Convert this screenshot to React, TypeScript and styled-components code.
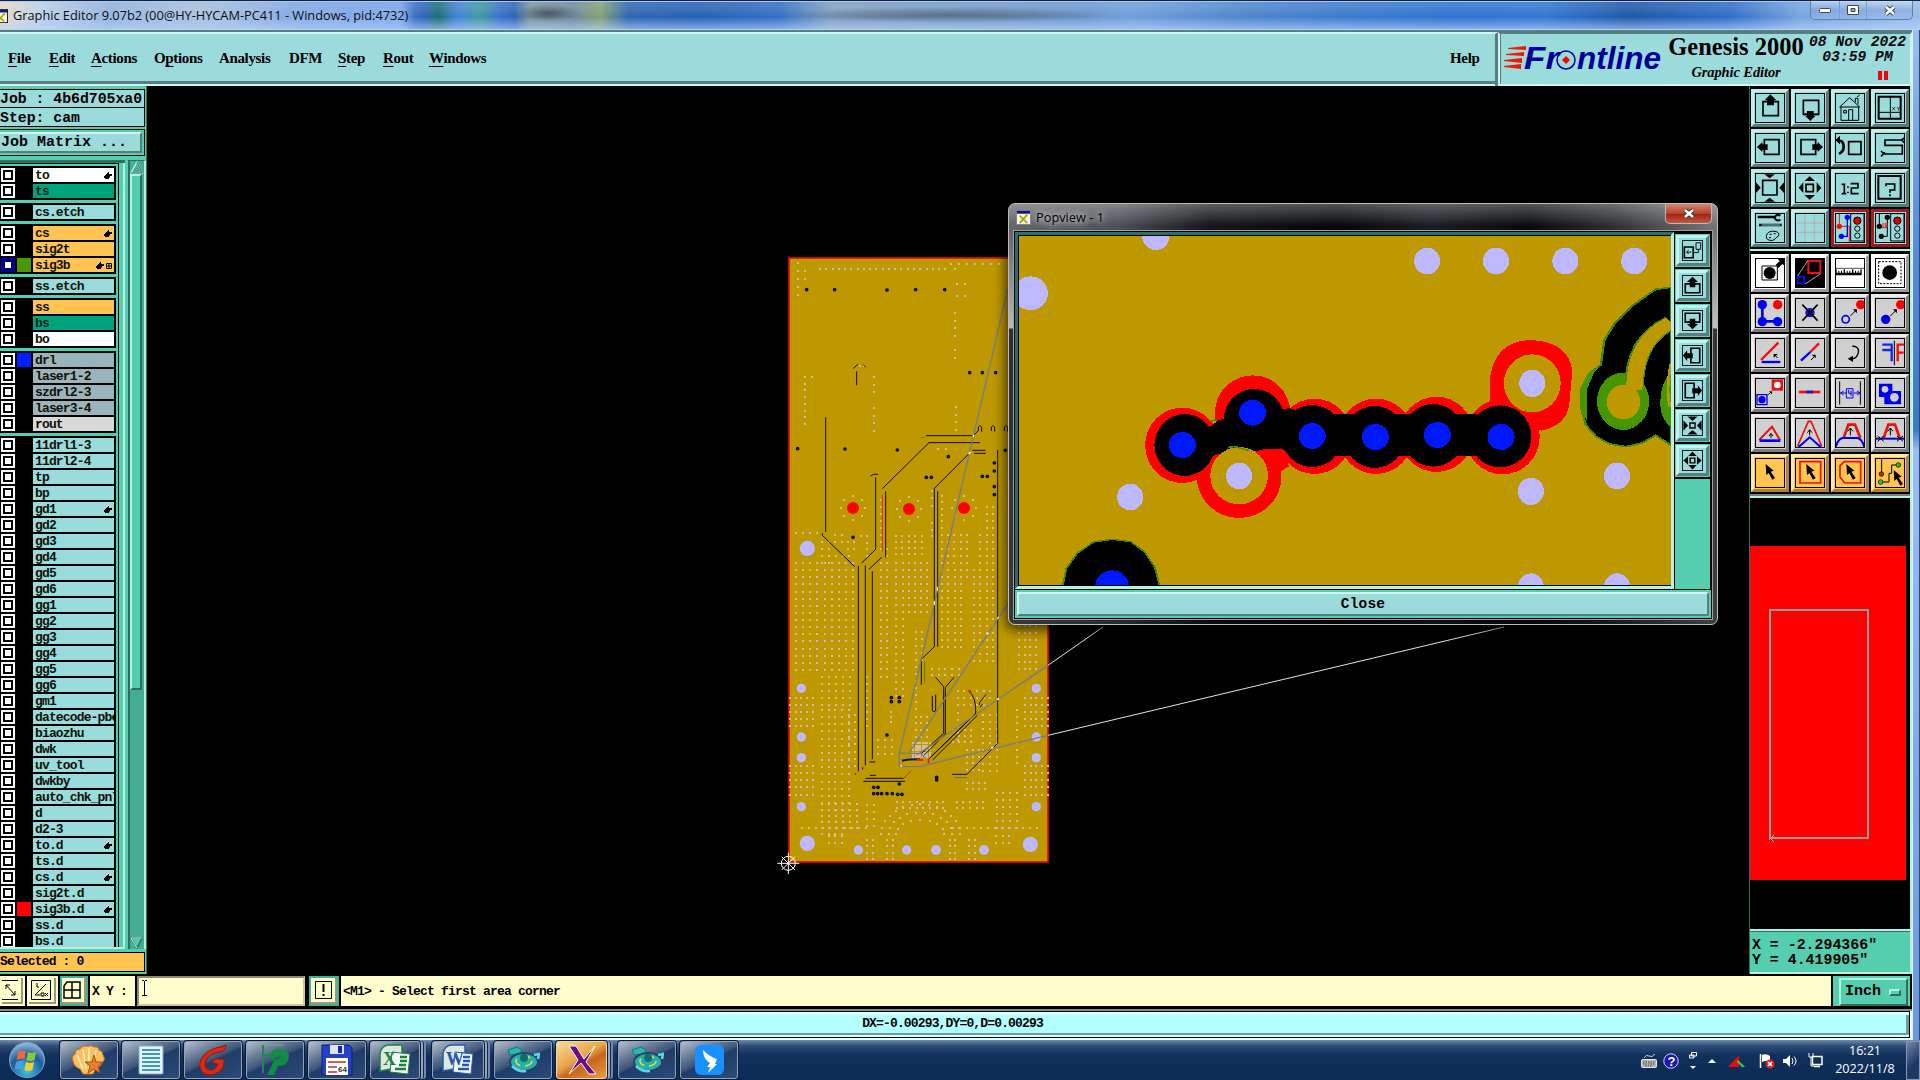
import React from "react";
import styled, { createGlobalStyle } from "styled-components";

const C = {
  aqua: "#9cdbdb",
  teal: "#55ceb0",
  tealDark: "#2f6e62",
  tealMid: "#44ae94",
  tealLight: "#b4f2e4",
  aquaLight: "#d2f5f3",
  aquaDark: "#557f80",
  orange: "#ffc550",
  cream: "#ffffce",
  gold: "#be9800",
  pad: "#bdb8ff",
};

const Global = createGlobalStyle`
  * { box-sizing: border-box; }
  body { margin: 0; background: #000; overflow: hidden; }
  svg { display: block; }
`;

const mono = `"Liberation Mono", "Courier New", monospace`;
const serif = `"Liberation Serif", "Times New Roman", serif`;
const sans = `"Open Sans", "Noto Sans", sans-serif`;

const Screen = styled.div`
  width: 1920px;
  height: 1080px;
  display: flex;
  flex-direction: column;
  background: #000;
  overflow: hidden;
`;

/* ---------- title bar ---------- */
const TitleBar = styled.header`
  height: 30px;
  display: flex;
  align-items: flex-start;
  border-top: 1px solid #16223c;
  box-shadow: inset 0 1px 0 #a8c8f0, inset 0 -1px 0 #b8d2f4;
  background:
    linear-gradient(180deg, rgba(255,255,255,0.12) 0 20%, rgba(0,0,0,0) 55%, rgba(190,215,255,0.55) 92%),
    radial-gradient(ellipse 30px 9px at 548px 12px, rgba(50,60,80,0.75), rgba(50,60,80,0) 100%),
    radial-gradient(ellipse 160px 8px at 950px 14px, rgba(70,80,90,0.6), rgba(70,80,90,0.3) 60%, rgba(70,80,90,0) 100%),
    linear-gradient(90deg, #e8d8c0 0, #b9cfe9 40px, #8fb1dc 110px, #a5bfdc 200px, #7fa6e4 300px, #76a3ea 400px, #3a6fc4 415px, #2f66b8 425px, #1b6f72 438px, #4383dc 458px, #3f9aa0 480px, #3872cc 500px, #2e66b2 515px, #7c96a0 530px, #6d8a9a 575px, #86a274 600px, #2f66b4 628px, #2462b4 700px, #3470c4 780px, #7e9fc0 830px, #6b98d0 1090px, #70a0dc 1130px, #4f86cc 1240px, #3c7ccc 1340px, #2e74d0 1450px, #3277d2 1545px, #1d58a8 1630px, #2f6fc8 1730px, #76a4e0 1800px, #9cbce8 1920px);
`;
const TitleIcon = styled.div`
  width: 8px;
  height: 14px;
  margin-top: 8px;
`;
const TitleText = styled.div`
  margin: 5px 0 0 5px;
  font: 12.8px/18px ${sans};
  letter-spacing: -0.02px;
  color: #0a0d18;
  white-space: nowrap;
  flex: 1;
  text-shadow: 0 0 6px rgba(255,255,255,0.6);
`;
const CaptionButtons = styled.div`
  display: flex;
  height: 19px;
  margin-right: 7px;
  border: 1px solid #5a80b4;
  border-top: 0;
  border-radius: 0 0 5px 5px;
  background: linear-gradient(180deg, rgba(255,255,255,0.35), rgba(120,160,215,0.4) 50%, rgba(160,195,240,0.5));
`;
const Caption = styled.div<{ $w: number }>`
  width: ${(p) => p.$w}px;
  display: flex;
  justify-content: center;
  align-items: center;
  & + & { border-left: 1px solid #7c9dcb; }
`;

/* ---------- main window frame ---------- */
const Frame = styled.div`
  display: flex;
  height: 1010px;
`;
const Client = styled.div`
  width: 1912px;
  display: flex;
  flex-direction: column;
`;
const WindowEdge = styled.div`
  width: 8px;
  border-left: 1px solid #d8f4ff;
  border-right: 1px solid #284a7c;
  background: linear-gradient(180deg, #9dc0ee 0, #7ea9e4 90px, #5c8ed8 200px, #3f78c8 400px, #9cbdf0 420px, #8eb2ec 600px, #6d97dc 1000px);
`;

const MenuStrip = styled.nav`
  display: flex;
  height: 56px;
  border-top: 2px solid ${C.aquaDark};
  background: ${C.aqua};
`;
const MenuBar = styled.div`
  width: 1498px;
  height: 54px;
  display: flex;
  align-items: center;
  padding: 0 14px 5px 8px;
  border-top: 2px solid ${C.aquaLight};
  border-right: 3px solid ${C.aquaDark};
  box-shadow: inset 0 -2px 0 ${C.aquaLight}, inset 0 -5px 0 ${C.aquaDark};
`;
const MenuItem = styled.div<{ $w: number }>`
  width: ${(p) => p.$w}px;
  font: bold 15px/18px ${serif};
  letter-spacing: -0.35px;
  color: #000;
  white-space: nowrap;
`;
const Key = styled.span`
  text-decoration: underline;
  text-decoration-thickness: 1px;
  text-underline-offset: 3px;
  text-decoration-skip-ink: none;
`;
const Spacer = styled.div` flex: 1; `;
const Brand = styled.div`
  flex: 1;
  display: flex;
  border: 2px solid ${C.aquaDark};
  border-left: 2px solid ${C.aquaLight};
  border-right-color: ${C.aquaLight};
  border-bottom-color: ${C.aquaLight};
  box-shadow: inset 1px 0 0 ${C.aquaDark};
`;
const Logo = styled.div`
  width: 167px;
  padding: 8px 0 0 4px;
`;
const Product = styled.div`
  width: 138px;
  text-align: center;
  color: #000;
`;
const ProductName = styled.div`
  font: bold 24.5px/28px ${serif};
  white-space: nowrap;
  margin-top: -1px;
`;
const ProductSub = styled.div`
  font: italic bold 14.5px/18px ${serif};
  letter-spacing: -0.1px;
  margin-top: 2px;
`;
const Stamp = styled.div`
  width: 105px;
  display: flex;
  flex-direction: column;
  align-items: center;
  padding-top: 1px;
  font: italic bold 14.7px/15px ${mono};
  white-space: nowrap;
  color: #0a0a0a;
`;
const Pause = styled.div`
  width: 10px;
  height: 9px;
  margin: 6px 0 0 50px;
  border-left: 4px solid #f00;
  border-right: 4px solid #f00;
`;

const Work = styled.main`
  display: flex;
  height: 888px;
`;

/* ---------- layer panel ---------- */
const LeftPanel = styled.aside`
  width: 147px;
  display: flex;
  flex-direction: column;
  background: ${C.teal};
  border-right: 1px solid ${C.tealDark};
  padding-top: 3px;
`;
const Info = styled.div`
  width: 145px;
  height: 19px;
  border: 1px solid #000;
  border-left: 0;
  background: ${C.aqua};
  font: bold 14.8px/18px ${mono};
  white-space: pre;
  & + & { border-top: 0; padding-top: 1px; }
`;
const MatrixFrame = styled.div`
  width: 145px;
  height: 27px;
  margin-top: 2px;
  padding: 2px 2px 2px 0;
  border: 1px solid #000;
  border-left: 0;
`;
const MatrixButton = styled.div`
  height: 21px;
  background: ${C.aqua};
  border-top: 2px solid ${C.aquaLight};
  border-right: 2px solid ${C.aquaDark};
  border-bottom: 2px solid ${C.aquaDark};
  font: bold 15px/18px ${mono};
  padding-left: 1px;
  white-space: pre;
`;
const ListArea = styled.div`
  display: flex;
  height: 789px;
  margin-top: 4px;
`;
const ListView = styled.div`
  width: 126px;
  display: flex;
  border-top: 3px solid ${C.tealDark};
  border-bottom: 2px solid ${C.tealLight};
`;
const ListFrame = styled.div`
  width: 119px;
  height: 784px;
  overflow: hidden;
  border-top: 1px solid #000;
  border-right: 1px solid #000;
  padding-top: 2px;
  display: flex;
  flex-direction: column;
  gap: 3px;
  & > * { flex-shrink: 0; }
`;
const ListEdge = styled.div`
  flex: 1;
  border-left: 2px solid ${C.teal};
  background: linear-gradient(90deg, ${C.teal} 2px, ${C.tealLight} 2px);
`;
const Group = styled.div`
  width: 116px;
  padding: 1px 0 1px 1px;
  background: #000;
`;
const Row = styled.div`
  height: 16px;
  display: flex;
  align-items: center;
`;
const Check = styled.div<{ $on?: boolean }>`
  width: 14px;
  height: 14px;
  border: 2px solid ${(p) => (p.$on ? "#0000a8" : "#fff")};
  background: ${(p) => (p.$on ? "#000060" : "#000")};
  padding: 2px;
  &::after { content: ""; display: block; width: 6px; height: 6px; background: #fff; }
`;
const Swatch = styled.div<{ $c?: string }>`
  width: 14px;
  height: 14px;
  margin: 0 2px;
  background: ${(p) => p.$c || "#000"};
`;
const Label = styled.div<{ $bg: string; $fg: string }>`
  width: 81px;
  height: 14px;
  display: flex;
  align-items: center;
  background: ${(p) => p.$bg};
  color: ${(p) => p.$fg};
  font: bold 13px/14px ${mono};
  letter-spacing: -0.85px;
  padding: 1px 0 0 2px;
  overflow: hidden;
  white-space: nowrap;
`;
const Marks = styled.div`
  margin-left: auto;
  display: flex;
  gap: 2px;
  padding-right: 2px;
`;
const ScrollBar = styled.div`
  width: 18px;
  margin-left: 3px;
  display: flex;
  flex-direction: column;
  border-left: 2px solid ${C.tealDark};
  border-right: 2px solid ${C.tealLight};
  border-top: 1px solid ${C.tealDark};
  background: ${C.tealMid};
`;
const Thumb = styled.div`
  width: 12px;
  height: 516px;
  background: ${C.teal};
  border-left: 2px solid ${C.tealLight};
  border-top: 2px solid ${C.tealLight};
  border-right: 2px solid ${C.tealDark};
  border-bottom: 2px solid ${C.tealDark};
`;
const Selected = styled.div`
  width: 145px;
  height: 20px;
  margin-top: 3px;
  border: 1px solid #000;
  border-left: 0;
  background: ${C.orange};
  font: bold 13px/17px ${mono};
  letter-spacing: -0.85px;
  white-space: pre;
`;

/* ---------- canvas ---------- */
const Canvas = styled.section`
  position: relative;
  width: 1602px;
  height: 888px;
  background: #000;
  overflow: hidden;
`;

/* ---------- pop view ---------- */
const Pop = styled.div`
  position: absolute;
  left: 861px;
  top: 117px;
  width: 710px;
  height: 422px;
  border: 1px solid #b9bcc0;
  border-radius: 7px;
  box-shadow: 0 2px 12px 3px rgba(0,0,0,0.65);
  background:
    linear-gradient(180deg, rgba(255,255,255,0.3) 0, rgba(255,255,255,0) 22px),
    linear-gradient(180deg, rgba(255,255,255,0) 27px, rgba(255,255,255,0.55) 124px, rgba(0,0,0,0.55) 125px, rgba(0,0,0,0.45) 100%),
    linear-gradient(90deg, #63666a 0, #4c4f54 110px, #14161b 200px, #050608 330px, #1a1d22 420px, #08090c 520px, #2a2c30 600px, #707276 700px);
  padding: 0 5px 5px;
  display: flex;
  flex-direction: column;
`;
const PopTitle = styled.div`
  height: 27px;
  display: flex;
  align-items: flex-start;
`;
const PopIcon = styled.div` margin: 6px 0 0 2px; `;
const PopName = styled.div`
  font: 12.8px/18px ${sans};
  color: #000;
  margin: 4px 0 0 5px;
  padding: 0 5px 0 0;
  text-shadow: 0 0 8px #d0d0d0, 0 0 5px #bbb, 0 0 10px #aaa;
  flex: 1;
`;
const PopClose = styled.div`
  width: 47px;
  height: 20px;
  border: 1px solid #c6b6b2;
  border-top: 0;
  border-radius: 0 0 5px 5px;
  background: linear-gradient(180deg, #cf8878 0, #b8412c 50%, #9c2210 52%, #c25a3c 100%);
  display: flex;
  justify-content: center;
  align-items: center;
`;
const PopBody = styled.div`
  flex: 1;
  border: 1px solid #000;
  outline: 1px solid #9ca0a4;
  background: ${C.teal};
  display: flex;
  flex-direction: column;
`;
const PopMain = styled.div`
  display: flex;
  height: 358px;
  border-bottom: 1px solid #000;
`;
const PopImage = styled.div`
  width: 659px;
  height: 357px;
  border-left: 3px solid ${C.tealDark};
  border-top: 3px solid ${C.tealDark};
  border-right: 3px solid ${C.tealLight};
  border-bottom: 3px solid ${C.tealLight};
  background: #000;
  padding: 1px;
  overflow: hidden;
`;
const PopTools = styled.div`
  flex: 1;
  border-left: 1px solid #000;
  border-right: 1px solid #000;
  border-top: 2px solid #000;
`;
const SmallButton = styled.div`
  height: 35px;
  border-bottom: 2px solid #000;
  padding: 1px;
  background: ${C.teal};
`;
const SmallFace = styled.div`
  width: 100%;
  height: 31px;
  border: 3px solid;
  border-color: #bff5f0 ${C.aquaDark} ${C.aquaDark} #bff5f0;
  background: ${C.aqua};
  display: flex;
  justify-content: center;
  align-items: center;
`;
const CloseBar = styled.div`
  flex: 1;
  margin: 2px;
  border: 2px solid;
  border-color: ${C.aquaLight} ${C.aquaDark} ${C.aquaDark} ${C.aquaLight};
  background: ${C.aqua};
  font: bold 14.5px/20px ${mono};
  letter-spacing: 0.2px;
  text-align: center;
`;

/* ---------- right panel ---------- */
const RightPanel = styled.aside`
  width: 163px;
  display: flex;
  flex-direction: column;
  border-left: 1px solid ${C.tealDark};
  border-right: 2px solid ${C.tealLight};
  background: #000;
`;
const ToolGrid = styled.div<{ $edge: string }>`
  display: grid;
  grid-template-columns: repeat(4, 38px);
  grid-auto-rows: 38px;
  gap: 2px;
  padding: 3px 2px 2px 1px;
  border-bottom: 2px solid ${(p) => p.$edge};
`;
const tones: Record<string, string[]> = {
  aqua: [C.aqua, "#c2efec", "#527c7c"],
  red: [C.aqua, "#a41c20", "#8c1c20"],
  white: ["#ffffff", "#ffffff", "#9a9a9a"],
  grey: ["#d0d0d0", "#ececec", "#7c7c7c"],
  orange: [C.orange, "#ffe7ad", "#a8843c"],
};
const Tool = styled.div<{ $tone: string }>`
  border: 3px solid;
  border-color: ${(p) => `${tones[p.$tone][1]} ${tones[p.$tone][2]} ${tones[p.$tone][2]} ${tones[p.$tone][1]}`};
  background: ${(p) => tones[p.$tone][0]};
  padding: 1px;
`;
const Overview = styled.div`
  flex: 1;
  border-top: 2px solid ${C.tealLight};
  border-bottom: 2px solid ${C.tealLight};
  padding-top: 48px;
`;
const OverBoard = styled.div`
  width: 156px;
  height: 334px;
  background: #f00;
  padding: 63px 0 0 19px;
`;
const Coords = styled.div`
  height: 43px;
  background: ${C.teal};
  border-top: 1px solid ${C.tealDark};
  border-bottom: 2px solid ${C.tealLight};
  font: bold 14.9px/15px ${mono};
  padding: 6px 0 0 2px;
  white-space: pre;
`;

/* ---------- bottom bars ---------- */
const CommandBar = styled.div`
  height: 37px;
  display: flex;
  align-items: stretch;
  padding: 2px 0 3px;
  background: #000;
  border-bottom: 2px solid #7c9490;
`;
const ModeButton = styled.div<{ $w: number; $on?: boolean }>`
  width: ${(p) => p.$w}px;
  padding: 2px;
  margin-right: 2px;
  background: ${(p) => (p.$on ? C.tealMid : C.cream)};
  display: flex;
`;
const ModeFace = styled.div`
  flex: 1;
  display: flex;
  justify-content: flex-end;
  align-items: center;
  overflow: hidden;
  background: ${C.cream};
  border-right: 2px solid #9a9a7c;
  border-bottom: 2px solid #9a9a7c;
  padding-right: 3px;
`;
const CreamText = styled.div<{ $w?: number }>`
  ${(p) => (p.$w ? `width: ${p.$w}px;` : "flex: 1;")}
  background: ${C.cream};
  font: bold 13px/31px ${mono};
  letter-spacing: -0.8px;
  padding-left: 2px;
  white-space: pre;
`;
const Entry = styled.div`
  width: 168px;
  margin: 0 4px 0 2px;
  background: ${C.cream};
  border: 2px solid;
  border-color: #8c8c74 #c8c8a4 #c8c8a4 #8c8c74;
  outline: 1px solid #000;
  padding: 2px 0 0 2px;
`;
const UnitBox = styled.div`
  width: 79px;
  margin-left: 2px;
  padding: 2px 2px 2px 6px;
  background: ${C.teal};
  border-right: 2px solid #000;
`;
const Unit = styled.div`
  height: 28px;
  display: flex;
  align-items: center;
  justify-content: space-between;
  padding: 0 5px 0 4px;
  border: 2px solid;
  border-color: ${C.tealLight} ${C.tealDark} ${C.tealDark} ${C.tealLight};
  font: bold 15px/22px ${mono};
`;
const UnitMark = styled.div`
  width: 12px;
  height: 7px;
  border: 2px solid;
  border-color: ${C.tealLight} ${C.tealDark} ${C.tealDark} ${C.tealLight};
`;
const StatusBar = styled.div`
  height: 29px;
  padding: 0 2px 2px 0;
  background: #e8ffff;
`;
const StatusText = styled.div`
  height: 27px;
  border: 1px solid #000;
  border-left: 0;
  background: #b3ffff;
  box-shadow: inset 0 3px 0 #dcffff, inset 0 -2px 0 #dcffff, inset -3px -4px 0 #6a9c9c;
  font: bold 13px/24px ${mono};
  letter-spacing: -0.85px;
  text-align: center;
  padding-right: 4px;
`;

/* ---------- taskbar ---------- */
const TaskBar = styled.footer`
  height: 40px;
  display: flex;
  border-top: 1px solid #6c88a8;
  background: linear-gradient(180deg, #6480a4 0, #2c4c78 5px, #12305c 14px, #0c2a56 100%);
`;
const Orb = styled.div`
  width: 60px;
  display: flex;
  justify-content: center;
  padding: 0 6px 0 0;
`;
const Task = styled.div<{ $w: number; $m: number; $active?: boolean; $stack?: boolean }>`
  width: ${(p) => p.$w}px;
  height: 38px;
  margin: 0 ${(p) => p.$m}px 0 0;
  border: 1px solid ${(p) => (p.$active ? "#f0d8a0" : "#8ea2bc")};
  border-radius: 3px;
  box-shadow: 0 0 0 1px #0c1c38${(p) => (p.$stack ? ", 3px 0 0 0 #94a6c0, 4px 0 0 0 #14284c, 6px 0 0 0 #7488a8" : "")};
  background: ${(p) =>
    p.$active
      ? "linear-gradient(150deg, #f8dc98 0, #e8a448 45%, #c8651c 60%, #e8a040 100%)"
      : "linear-gradient(155deg, #b4bfce 0, #6c7e98 28%, #3c5478 48%, #203c68 52%, #2c4a78 100%)"};
  display: flex;
  justify-content: center;
  align-items: center;
`;
const Tray = styled.div`
  display: flex;
  align-items: center;
  padding-right: 1px;
`;
const TrayItem = styled.div<{ $ml: number }>`
  margin-left: ${(p) => p.$ml}px;
`;
const Clock = styled.div`
  width: 82px;
  text-align: center;
  color: #fff;
  font: 12.6px/18px ${sans};
  padding-top: 1px;
`;
const Peek = styled.div`
  width: 14px;
  border: 1px solid #8496b0;
  background: linear-gradient(135deg, #7488a8, #1c3864 60%);
`;

/* ---------- icons ---------- */
const Hand = () => (
  <svg width="8" height="8" viewBox="0 0 8 8">
    <path d="M0 4h1V3h1V2h1V1h1V0h1v2h3v2H6v1H5.500v1H5v1H1V6H0z" fill="#000" />
  </svg>
);
const GridMark = () => (
  <svg width="6" height="8" viewBox="0 0 6 8">
    <path d="M.5 1.500h5v5h-5zM3 1.500v5M.5 4h5" fill="none" stroke="#000" />
  </svg>
);
const AppIcon = ({ size = 14 }: { size?: number }) => (
  <svg width={size} height={size} viewBox="0 0 16 16">
    <rect x="0.500" y="0.500" width="15" height="15" fill="#f4f4e8" stroke="#808080" />
    <rect x="1" y="1" width="14" height="3" fill="#101880" />
    <path d="M4 6l8 8M12 5l-8 9" stroke="#b0a800" strokeWidth="2" />
  </svg>
);

const B = "#0000f0";
const R = "#ee1010";
const K = "#000";
const s = (d: string, c = K, w = 4) => <path d={d} fill="none" stroke={c} strokeWidth={w} />;
const f = (d: string, c = K) => <path d={d} fill={c} />;
const sw = (right: string) => (
  <>
    {s("M47 2h40v82h-40z", K, 3)}
    <circle cx="67" cy="23" r="11" fill="#e00000" stroke={K} strokeWidth="3" />
    <circle cx="67" cy="47" r="8" fill="none" stroke={K} strokeWidth="3" />
    <circle cx="67" cy="68" r="8" fill="none" stroke={K} strokeWidth="3" />
    <circle cx="13" cy="40" r="8" fill={right === "a" ? R : K} />
    <circle cx="37" cy="13" r="8" fill={right === "a" ? B : K} />
    <circle cx="19" cy="70" r="8" fill={right === "a" ? B : K} />
  </>
);
const cursor = "M0 0l24 20-9 3 13 19-8 5-11-20-7 6z";

const icons: Record<string, React.ReactNode> = {
  up: <>{s("M24 26h46v42h-46z", K, 5)}{f("M46 4l18 18h-7v15h-21v-15h-7z")}</>,
  down: <>{s("M36 64h-11v-42h46v42h-11", K, 5)}{f("M46 84l16-16h-6v-14h-20v14h-6z")}{s("M25 64h46", K, 5)}</>,
  home: <>{s("M14 42l30-28 30 28M18 42v40h53v-40M14 42h60M41 82v-32h12v32M26 52h8v8h-8zM61 28v-12h8v18M66 12l8-6", K, 3)}</>,
  xy: <>{s("M11 11h66v66h-66z", K, 6)}{s("M46 11v66M11 58h66", K, 3)}{s("M52 42l8 10M60 42l-8 10M66 42l4 5 4-5M70 47v6", K, 2)}</>,
  left: <>{s("M28 20h44v44h-44z", K, 5)}{f("M6 42l16-15v7h16v17h-16v6z")}</>,
  right: <>{s("M18 20h44v44h-44z", K, 5)}{f("M84 42l-16-15v7h-16v17h16v6z")}</>,
  prev: <>{s("M41 26h37v38h-37z", K, 5)}{s("M10 24h8q8 4 8 18 0 14-14 20", K, 8)}{f("M1 22l14-14v26z")}</>,
  snake: <>{s("M80 21h-50v16h52v26h-54v-6M80 21l8-6M80 21l8 8M26 62l-8-8M26 62l-8 8", K, 5)}</>,
  out: <>{s("M23 22h43v44h-43z", K, 5)}{f("M44 16l16-12h-32zM44 74l16 12h-32zM17 44l-14-16v32zM73 44l14-16v32z")}</>,
  in: <>{s("M33 34h22v22h-22z", K, 5)}{f("M44 10l16 14h-32zM44 80l16-14h-32zM11 44l14-16v32zM79 44l-14-16v32z")}</>,
  half: <>{s("M20 34h8v28M39 40v4M39 56v4M47 32h22v13h-20v17h22M20 62h14", K, 5)}</>,
  help: <>{s("M10 9h67v68h-67z", K, 6)}{s("M33 40v-7h26v18h-14v8M45 64v6", K, 5)}</>,
  tools: <>{s("M8 12h50M12 36h68", K, 7)}{s("M76 8a10 8 0 1 0 0 12", K, 6)}{s("M20 36h56", C.aqua, 3)}{s("M34 68q4-16 26-13 14 2 11 14-6 2-10 8-6 8-18 5-12-4-9-14zM44 64h6M56 62h6M42 74h6", K, 3)}</>,
  grid: <>{s("M30 2v86M58 2v86M2 30h86M2 58h86", "#cf8f96", 2)}</>,
  netA: <>{s("M13 0v40h30v50", R, 3)}{s("M37 13v57h-18", B, 4)}{sw("a")}</>,
  netB: <>{s("M13 0v40M37 13v57h-18", K, 3)}{s("M16 44h20M24 30v12M31 30v12M36 30v12", R, 3)}{sw("b")}</>,
  move: <>{s("M21 24h46v42h-46z", K, 3)}<circle cx="44" cy="45" r="18" />{f("M62 20l12-10-6-8h22v22l-8-6-12 12z")}</>,
  zoom: <>{f("M1 1h88v88h-88z")}{s("M40 9h36v36h-36z", R, 6)}{s("M8 56h20v20h-20z", "#1010f0", 5)}{s("M8 54l30-46M30 78l46-30", "#fff", 2)}</>,
  ruler: <>{s("M2 31h86", K, 2)}{f("M2 52v-18h3v10h5v-6h3v6h5v-6h3v6h5v-10h4v10h5v-6h3v6h5v-6h3v6h5v-10h4v10h5v-6h3v6h5v-6h3v6h5v-10h4v18z")}</>,
  pick: <><rect x="11" y="11" width="67" height="66" fill="none" stroke={K} strokeWidth="3" strokeDasharray="6 4" /><circle cx="44" cy="44" r="22" /></>,
  nodes: <>{s("M22 20v50h46", B, 8)}<circle cx="22" cy="20" r="14" fill={B} /><circle cx="68" cy="20" r="14" fill="#f00" /><circle cx="22" cy="71" r="14" fill={B} /><circle cx="68" cy="71" r="14" fill={B} /></>,
  cross: <><circle cx="45" cy="44" r="14" fill="#1414d0" />{s("M22 20l46 48M68 20l-46 48", K, 5)}</>,
  linkO: <><circle cx="77" cy="20" r="14" fill="#f00" /><circle cx="32" cy="64" r="11" fill="none" stroke={B} strokeWidth="5" />{s("M46 54l17-17", K, 3)}{f("M54 34h12v12z")}</>,
  linkF: <><circle cx="77" cy="20" r="14" fill="#f00" /><circle cx="32" cy="64" r="14" fill={B} />{s("M46 54l17-17", K, 3)}{f("M54 34h12v12z")}</>,
  angle: <>{s("M18 66l52-52", R, 7)}{s("M20 72h56", B, 7)}{s("M58 50l10 10", K, 3)}{f("M56 48h12l-12 11z")}</>,
  slope: <>{s("M46 42l26-26", R, 7)}{s("M18 68l28-26", B, 7)}{s("M48 66l10-10", K, 3)}{f("M62 50h-12l12 11z")}</>,
  turn: <>{s("M52 24q22 2 18 20-6 22-24 18", K, 4)}{f("M38 62l16-9v19z")}</>,
  mirror: <>{s("M22 20h28v50M22 36h26", "#2020e8", 7)}{s("M88 20h-20v50M86 44h-18", R, 7)}{s("M58 8v74", K, 3)}</>,
  copy: <>{f("M50 4h34v34h-34z", R)}<circle cx="67" cy="21" r="10" fill="#fff" />{s("M6 50h30v30h-30z", B, 4)}<circle cx="21" cy="65" r="11" fill={B} />{s("M40 50l8-8", K, 3)}{f("M42 40h9v9z")}</>,
  line: <>{s("M12 42h64", R, 8)}{s("M34 42h20", "#1818c8", 8)}</>,
  dim: <>{s("M14 10v70M76 10v70", K, 3)}{s("M16 45h18M56 45h20M26 39l-9 6 9 6M66 39l9 6-9 6M34 32h20v28h-20zM41 36v10h9M48 38v16", B, 3)}</>,
  blobs: <>{f("M12 17h40v22h26v40h-50v-22h-16z", B)}<circle cx="30" cy="34" r="10" fill="#d0d0d0" /><circle cx="58" cy="58" r="13" fill="#d0d0d0" /></>,
  triA: <>{s("M13 66l38-40 24 40", R, 6)}{s("M14 68h62", B, 8)}{s("M48 60v-12M42 54l6-8 6 8", K, 3)}</>,
  triB: <>{s("M8 84l32-74 8 0 32 74", R, 5)}{s("M10 88l34-30 34 30", B, 6)}{s("M44 52v-16M37 44l7-9 7 9", K, 3)}</>,
  trapA: <>{s("M26 60l14-40h20l16 40", R, 8)}{s("M2 88q6-24 20-28h46q14 4 20 28", B, 6)}{s("M46 52v-20M38 40l8-10 8 10", K, 3)}</>,
  trapB: <>{s("M26 60l14-40h20l14 40", R, 8)}{s("M2 62h86", B, 6)}{s("M46 52v-20M38 40l8-10 8 10M8 54l18 16M26 54l-18 16M66 54l18 16M84 54l-18 16", K, 3)}</>,
  sel: <g transform="translate(32,18)">{f(cursor)}</g>,
  selBox: <>{s("M15 11h62v64h-62z", R, 5)}<g transform="translate(34,18)">{f(cursor)}</g></>,
  selPoly: <>{s("M28 11h49v64h-48l-14-18v-34z", R, 5)}<g transform="translate(34,18)">{f(cursor)}</g></>,
  selNet: <>{s("M20 4v44M18 72h24v-26h8v-25h20", K, 3)}<circle cx="19" cy="48" r="7" fill="#d02010" stroke={K} strokeWidth="2" /><circle cx="17" cy="72" r="7" fill="#20d040" stroke={K} strokeWidth="2" /><circle cx="70" cy="21" r="7" fill="#20c020" stroke={K} strokeWidth="2" /><g transform="translate(56,36)">{f(cursor)}</g></>,
  restore: <>{s("M10 30h38v46h-38z", K, 7)}{s("M60 12h20v28h-20zM48 54h22v-14", K, 4)}{s("M20 52h20M28 44l-8 8 8 8", K, 4)}</>,
};

/* heavier drawings for the narrow pop-view buttons */
const small: Record<string, React.ReactNode> = {
  restore: icons.restore,
  up: <>{s("M14 38h62v38h-62z", K, 7)}{f("M45 8l24 22h-12v22h-24v-22h-12z")}</>,
  down: <>{s("M14 14h62v38h-62z", K, 7)}{f("M45 82l24-22h-12v-22h-24v22h-12z")}</>,
  left: <>{s("M38 14h38v62h-38z", K, 7)}{f("M4 45l18-22v12h24v22h-24v12z")}</>,
  right: <>{s("M14 14h38v62h-38z", K, 7)}{f("M86 45l-18-22v12h-24v22h24v12z")}</>,
  out: <>{s("M34 34h22v22h-22z", K, 6)}{f("M45 26l22-20h-44zM45 64l22 20h-44zM26 45l-20-22v44zM64 45l20-22v44z")}</>,
  in: <>{s("M35 35h20v20h-20z", K, 6)}{f("M45 6l18 20h-36zM45 84l18-20h-36zM6 45l20-18v36zM84 45l-20-18v36z")}</>,
};

const Glyph = ({ name, size = 30 }: { name: string; size?: number }) => (
  <svg width={size} height={size} viewBox="0 0 90 90">
    {size < 30 ? small[name] : icons[name]}
    <rect x="1.500" y="1.500" width="87" height="87" fill="none" stroke="#000" strokeWidth={size < 30 ? 4.3 : 3} />
  </svg>
);

const topTools = ["up", "down", "home", "xy", "left", "right", "prev", "snake", "out", "in", "half", "help", "tools", "grid", "netA", "netB"];
const editTools = [
  "move", "zoom", "ruler", "pick", "nodes", "cross", "linkO", "linkF", "angle", "slope", "turn", "mirror",
  "copy", "line", "dim", "blobs", "triA", "triB", "trapA", "trapB", "sel", "selBox", "selPoly", "selNet",
];

/* ---------- layers ---------- */
type Layer = { n: string; bg?: string; fg?: string; c?: string; hand?: boolean; grid?: boolean; on?: boolean };
const O = C.orange;
const G = "#00a47c";
const S = "#9bb3bb";
const layers: Layer[][] = [
  [{ n: "to", bg: "#fff", hand: true }, { n: "ts", bg: G, fg: "#04281c" }],
  [{ n: "cs.etch" }],
  [{ n: "cs", bg: O, hand: true }, { n: "sig2t", bg: O }, { n: "sig3b", bg: O, hand: true, grid: true, c: "#489800", on: true }],
  [{ n: "ss.etch" }],
  [{ n: "ss", bg: O }, { n: "bs", bg: G, fg: "#04281c" }, { n: "bo", bg: "#fff" }],
  [{ n: "drl", bg: S, c: "#0020ff" }, { n: "laser1-2", bg: S }, { n: "szdrl2-3", bg: S }, { n: "laser3-4", bg: S }, { n: "rout", bg: "#d9d9d9" }],
  [
    ..."11drl1-3 11drl2-4 tp bp gd1* gd2 gd3 gd4 gd5 gd6 gg1 gg2 gg3 gg4 gg5 gg6 gm1 datecode-pbe biaozhu dwk uv_tool dwkby auto_chk_pnl d d2-3 to.d* ts.d cs.d* sig2t.d"
      .split(" ")
      .map((t) => ({ n: t.replace("*", ""), hand: t.endsWith("*") })),
    { n: "sig3b.d", hand: true, c: "#f00" },
    { n: "ss.d" },
    { n: "bs.d" },
  ],
];

/* ---------- board drawing ---------- */
type Grid = [number, number, number, number, number, number];
const viaGrids: Grid[] = [
  [54, 39, 1, 5, 20, 24], [75, 63, 1, 2, 20, 24], [120, 57, 21, 1, 18.8, 0], [525, 57, 1, 1, 0, 0], [513, 42, 7, 1, 24, 0],
  [531, 101, 2, 2, 24, 37], [525, 189, 1, 4, 0, 23], [525, 300, 1, 2, 0, 24], [528, 471, 1, 4, 0, 23],
  [75, 381, 1, 8, 0, 20.2], [96, 381, 1, 1, 0, 0], [282, 381, 1, 3, 0, 23], [282, 474, 1, 4, 0, 23], [474, 597, 2, 1, 24, 0],
  [240, 348, 2, 1, 13, 0], [48, 849, 4, 1, 21, 0], [303, 750, 1, 8, 0, 21], [456, 723, 1, 3, 0, 22], [456, 819, 1, 3, 0, 20],
  [486, 738, 1, 6, 0, 19], [620, 771, 2, 5, 18, 21], [348, 858, 5, 4, 19.5, 18], [486, 855, 5, 5, 18.7, 21], [600, 855, 3, 5, 20, 21],
  [126, 876, 2, 4, 20, 21], [165, 855, 2, 2, 21, 21], [204, 876, 2, 2, 17, 21], [243, 858, 2, 1, 18, 0], [168, 918, 3, 1, 20, 0], [261, 878, 1, 3, 0, 20],
  [321, 897, 1, 3, 0, 21], [48, 939, 9, 16, 21.5, 21.4], [304, 939, 2, 17, 18, 21.3], [348, 939, 2, 20, 21, 21], [387, 939, 4, 8, 18, 21],
  [408, 1146, 1, 12, 0, 21], [426, 1146, 1, 5, 0, 21], [486, 960, 4, 12, 19, 21], [582, 960, 4, 14, 19, 21], [561, 960, 1, 2, 0, 21], [717, 1128, 4, 7, 17, 21.5],
  [126, 1281, 5, 5, 21, 21], [30, 1344, 5, 5, 17, 21], [735, 1344, 5, 5, 17, 21], [126, 1380, 5, 15, 20, 21.5], [206, 1395, 2, 8, 20, 22],
  [262, 1280, 1, 8, 0, 21], [333, 1385, 1, 3, 0, 16], [295, 1470, 3, 3, 20, 21], [30, 1548, 5, 5, 17, 21.5], [735, 1548, 5, 5, 17, 21.5],
  [712, 1380, 1, 9, 0, 20], [456, 1258, 5, 2, 20, 18], [534, 1322, 6, 3, 19.5, 21], [535, 1390, 1, 5, 0, 20], [610, 1395, 3, 9, 20, 21],
  [650, 1630, 4, 6, 20, 21], [126, 1662, 6, 5, 21, 18], [262, 1665, 2, 4, 20, 21], [66, 1734, 10, 1, 21.3, 0], [520, 1734, 13, 1, 21, 0],
  [350, 1656, 8, 2, 20, 18], [530, 1655, 5, 2, 20, 19], [126, 1752, 4, 1, 20, 0], [146, 1758, 3, 2, 20, 20], [262, 1770, 2, 4, 18, 19], [322, 1770, 2, 4, 16, 19],
  [510, 1770, 2, 4, 16, 19], [568, 1770, 2, 4, 18, 19], [648, 1758, 3, 2, 20, 20], [400, 1480, 8, 7, 7, 7], [560, 1500, 3, 4, 18, 20], [560, 1598, 4, 2, 18, 18],
  [408, 1400, 3, 4, 16, 20], [520, 1440, 4, 3, 18, 18],
];
const drills = [
  [80, 119], [164, 119], [321, 120], [407, 119], [494, 119], [569, 368], [607, 368], [647, 368], [53, 596], [195, 597], [352, 600],
  [505, 620], [439, 682], [454, 682], [607, 679], [622, 679], [643, 639], [643, 663], [643, 710], [643, 734], [676, 601], [219, 862],
  [321, 1455], [334, 1343], [334, 1355], [358, 1343], [358, 1355], [470, 1582], [470, 1590], [358, 1602], [281, 1612], [294, 1612],
  [281, 1631], [293, 1631], [305, 1631], [321, 1631], [337, 1631], [353, 1633], [366, 1633],
];
const targets = [[219, 774], [387, 777], [552, 774]];
const pads = [
  [64, 1315, 14], [64, 1461, 14], [64, 1523, 14], [64, 1670, 14], [769, 1315, 14], [769, 1461, 14], [769, 1523, 14], [769, 1670, 14],
  [235, 1800, 14], [380, 1800, 14], [468, 1800, 15], [612, 1800, 15], [82, 895, 23], [82, 1780, 23], [751, 1783, 23],
];
const traces = [
  "M137 502v344M127 850v6l97 94M287 682v216l-42 41M317 724v198M305 922l-38 36M230 364v42",
  "M220 355l14-12M250 344l7 8M272 678q8-8 22-5M438 557h142l14-14M307 716l140-138h153M577 601h39M582 610h36M566 612l-103 103v475M473 724v466",
  "M595 543v-12q4-8 10 0v14M634 543v-12q4-8 10 0v14M673 543v-12q4-8 10 0v14M653 600v880l-92 93h-45M463 1190l-39 38v76",
  "M204 930l18 18M235 948v616M256 946v600M277 964v564M268 1536h18M270 1576h18M248 1552v6M226 1570v4M256 1585h115M250 1594h125",
  "M457 1338v44q5 6 10 0v-48M467 1282l24 28v140l-68 62M522 1282l-26 30v140l-64 64M565 1322q25 20 22 68l-142 138M592 1396l-134 134M588 1390l-138 134M598 1365v-6l20-26M600 1372l8-10",
];

const Board = () => (
  <svg width="1602" height="888" viewBox="147 86 1602 888">
    <g transform="translate(780,250) scale(0.33333)">
      <rect x="27" y="24" width="777" height="1812" fill={C.gold} stroke="#f00808" strokeWidth="5" />
      <g fill="#d3bb9c" shapeRendering="crispEdges">
        {viaGrids.map(([x, y, nx, ny, dx, dy], g) =>
          Array.from({ length: nx * ny }, (_, i) => (
            <rect key={`${g}-${i}`} x={x + (i % nx) * dx - 3} y={y + Math.floor(i / nx) * dy - 3} width="6" height="6" />
          ))
        )}
        {targets.map(([x, y]) =>
          Array.from({ length: 8 }, (_, i) => (
            <rect key={`${x}-${i}`} x={x + 37 * Math.cos((i * Math.PI) / 4) - 3} y={y + 36 * Math.sin((i * Math.PI) / 4) - 3} width="6" height="6" />
          ))
        )}
        {[[118, 90, 15], [95, 66, 12], [72, 44, 9]].map(([rx, ry, n]) =>
          Array.from({ length: n }, (_, i) => {
            const a = Math.PI + (i * Math.PI) / (n - 1);
            return <rect key={`${rx}-${i}`} x={418 + rx * Math.cos(a)} y={1750 + ry * Math.sin(a)} width="6" height="6" />;
          })
        )}
      </g>
      {targets.map(([x, y]) => <circle key={x} cx={x} cy={y} r="18" fill="#f00" />)}
      {pads.map(([x, y, r], i) => <circle key={i} cx={x} cy={y} r={r} fill={C.pad} />)}
      {traces.map((d, i) => <path key={i} d={d} fill="none" stroke="#0c0a00" strokeWidth="3" />)}
      {drills.map(([x, y], i) => (
        <g key={i}>
          <circle cx={x} cy={y} r="5.500" fill="#05080c" />
          <rect x={x - 2} y={y - 2} width="4" height="4" fill="#102060" />
        </g>
      ))}
      <path d="M307 735v168M371 1585l22-22" stroke="#e02800" strokeWidth="3" />
      <path d="M434 1234v64M524 1583h38M421 563h14" stroke="#508800" strokeWidth="3" />
      <path d="M366 1532q20-4 54-4" fill="none" stroke="#101080" strokeWidth="6" />
      <path d="M410 1530h20M446 1526v14M568 1320l6 6" stroke="#f02000" strokeWidth="6" />
      <path
        d="M358 1510L683 118M388 1508L700 1037M410 1515L804 1246M425 1548L804 1456M358 1510h64l14 14M358 1510v36l10 4h60"
        fill="none" stroke="#767c86" strokeWidth="4"
      />
      <path d="M804 1246L969 1131M804 1456L2172 1131" stroke="#e4e4e4" strokeWidth="3" />
      <path d="M652 1106l4-6M621 1154l4-6M651 1349l6-4M472 1022v-10M463 1064v-10M566 612l6-6M580 560v-6M362 1548h4M634 1495l6-4" stroke="#fff" strokeWidth="4" />
      <g fill="none" stroke="#fff" strokeWidth="3">
        <circle cx="25" cy="1840" r="21" />
        <path d="M-8 1840h66M25 1808v64M5 1820l40 40M45 1820l-40 40" />
      </g>
    </g>
  </svg>
);

const popDots = [
  [334, 139, 29, 41], [65, 310, 37, 51], [917, 213, 28, 40], [1065, 213, 28, 40], [1214, 213, 28, 40], [1362, 213, 28, 40],
  [279, 921, 28, 40], [1140, 904, 28, 41], [1325, 858, 28, 40], [1140, 1190, 28, 40], [1325, 1190, 28, 40],
];
const chain = [
  [391, 765, 396, 765, 65, 93], [542, 668, 545, 690, 65, 93], [670, 738, 670, 738, 66, 93], [806, 741, 804, 741, 66, 93],
  [939, 735, 930, 736, 66, 94], [1076, 741, 1074, 739, 67, 93],
];
const PopDrawing = () => (
  <svg width="652" height="349" viewBox="40 138 1401 1047" preserveAspectRatio="none" shapeRendering="crispEdges">
    <rect x="40" y="138" width="1401" height="1047" fill={C.gold} />
    {popDots.map(([x, y, a, b], i) => <ellipse key={i} cx={x} cy={y} rx={a} ry={b} fill={C.pad} />)}
    <g fill="#f00">
      <ellipse cx="391" cy="766" rx="80" ry="113" />
      <ellipse cx="542" cy="668" rx="81" ry="112" />
      <ellipse cx="675" cy="739" rx="80" ry="113" />
      <ellipse cx="807" cy="739" rx="80" ry="113" />
      <ellipse cx="937" cy="733" rx="80" ry="113" />
      <ellipse cx="1079" cy="740" rx="80" ry="113" />
      <ellipse cx="513" cy="860" rx="91" ry="124" />
      <path d="M1051 640V575Q1060 452 1140 450Q1222 455 1229 545L1222 650Q1212 708 1162 722L1130 700zM560 770h50l10 60-20 15z" />
    </g>
    <ellipse cx="1143" cy="580" rx="61" ry="87" fill={C.gold} />
    <path d="M396 765L470 690L545 665L620 655L670 672H1074V798H670L600 776H510L450 800z" fill="#000" />
    {chain.map(([, , x, y, a, b], i) => <ellipse key={i} cx={x} cy={y} rx={a} ry={b} fill="#000" />)}
    <ellipse cx="513" cy="857" rx="62" ry="86" fill={C.gold} />
    <path d="M490 772q15-4 25 2l20 8M452 694l14-6" fill="none" stroke="#4a8a00" strokeWidth="4" />
    {chain.map(([x, y], i) => <ellipse key={i} cx={x} cy={y} rx="29" ry="39" fill="#0018ff" />)}
    <ellipse cx="1143" cy="580" rx="28" ry="41" fill={C.pad} />
    <ellipse cx="513" cy="858" rx="28" ry="40" fill={C.pad} />
    <path d="M134 1186L142 1135L165 1090L200 1056L240 1048L280 1055L310 1086L332 1132L342 1186z" fill="#000" stroke="#4a8a00" strokeWidth="4" />
    <ellipse cx="240" cy="1188" rx="36" ry="47" fill="#0018ff" />
    <path d="M1441 292L1408 298L1360 345L1320 400L1298 450L1290 525L1265 550L1247 600V650L1258 705L1280 740L1310 762L1345 770L1380 758L1408 736L1441 765z" fill="#000" stroke="#4a8a00" strokeWidth="5" />
    <path d="M1288 528L1262 550L1247 600V660L1260 690V600L1275 550z" fill="#459600" />
    <ellipse cx="1338" cy="634" rx="56" ry="86" fill="#459600" />
    <path d="M1441 545Q1418 580 1418 635T1441 710z" fill="#459600" />
    <path d="M1441 398Q1362 450 1362 590" fill="none" stroke="#4a8a00" strokeWidth="42" />
    <path d="M1441 398Q1362 450 1362 600" fill="none" stroke={C.gold} strokeWidth="35" />
    <ellipse cx="1339" cy="636" rx="36" ry="52" fill={C.gold} />
    <path d="M1441 520q-12 80-2 130" fill="none" stroke={C.gold} strokeWidth="6" />
  </svg>
);

const FrontlineLogo = () => (
  <svg width="162" height="32" viewBox="0 0 162 32">
    <g fill="#f01808">
      <path d="M4 6l18-2v4l-18-1zM2 12l18-2v4l-18-1zM0 18l18-2v5l-18-2zM0 24l17-2v5l-17-2z" />
    </g>
    <text x="20" y="27" textLength="35" lengthAdjust="spacingAndGlyphs" fontFamily="Liberation Sans, Arial, sans-serif" fontWeight="bold" fontStyle="italic" fontSize="31" fill="#000098">Fr</text>
    <text x="73" y="27" textLength="84" lengthAdjust="spacingAndGlyphs" fontFamily="Liberation Sans, Arial, sans-serif" fontWeight="bold" fontStyle="italic" fontSize="31" fill="#000098">ntline</text>
    <circle cx="62" cy="18" r="9" fill="none" stroke="#000098" strokeWidth="1.500" />
    <path d="M62 14l4 4-4 4-4-4z" fill="#f00" />
  </svg>
);

const menus: [string, number, number][] = [
  ["File", 41, 0], ["Edit", 42, 0], ["Actions", 63, 0], ["Options", 65, 1], ["Analysis", 70, -1], ["DFM", 49, -1], ["Step", 45, 0], ["Rout", 46, 0], ["Windows", 80, 0],
];

/* ---------- taskbar icons ---------- */
const shell = (
  <svg width="34" height="32" viewBox="0 0 34 32">
    <path d="M17 2q3-1 5 1 4-1 5 3 4 1 4 5 3 4 0 7-4 6-8 8l-2 4h-10l-3-5q-6-2-7-8-2-5 2-7 0-5 5-5 2-4 6-3z" fill="#f8c060" stroke="#b87020" />
    <path d="M11 25L5 11M14 25L11 6M17 25V4M21 24l3-17" stroke="#fff0c0" strokeWidth="1.500" />
    <path d="M22 11l2 7 7 0-5 4 2 7-6-4-6 4 2-7-5-4 7 0z" fill="#e88030" stroke="#a85010" />
  </svg>
);
const notes = (
  <svg width="26" height="30" viewBox="0 0 26 30">
    <rect x="1" y="1" width="24" height="28" rx="1" fill="#e8f4fc" stroke="#7aa8c8" />
    <path d="M4 5h18M4 9h18M4 13h18M4 17h18M4 21h18M4 25h18" stroke="#3c94c8" strokeWidth="2" />
  </svg>
);
const redG = (
  <svg width="30" height="32" viewBox="0 0 30 32">
    <path d="M23 3l5-2q0 6-6 7-10 1-14 8-3 8 3 10 6 1 9-6l-6-1 2-4h10q1 8-5 13-8 5-16 1-7-8 1-18Q13 4 23 3z" fill="#dc2814" stroke="#901808" />
  </svg>
);
const greenP = (
  <svg width="32" height="34" viewBox="0 0 32 34">
    <path d="M5 2h20" stroke="#70a890" />
    <path d="M4 2v28M4 12h6" stroke="#208850" strokeWidth="2" />
    <path d="M10 14q2-8 10-8 10 0 10 8-1 9-11 9l-4 9h-7l5-10q1-6 6-6 4-2 1-4-4 2-6 6z" fill="#108c44" />
  </svg>
);
const floppy = (
  <svg width="32" height="34" viewBox="0 0 32 34">
    <path d="M1 2h27l3 3v27H1z" fill="#2440c8" stroke="#101c70" />
    <path d="M9 2h14v9H9z" fill="#e0e4f0" />
    <path d="M17 3h4v7h-4z" fill="#1828a0" />
    <path d="M5 15h22v17H5z" fill="#fff" />
    <path d="M7 19h18M7 24h9M7 29h9" stroke="#b03040" strokeWidth="1.500" />
    <text x="17" y="29" fontSize="8" fontWeight="bold" fontFamily="Liberation Sans, sans-serif" fill="#333">64</text>
  </svg>
);
const office = (letter: string, c: string) => (
  <svg width="34" height="32" viewBox="0 0 34 32">
    <path d="M2 27V10Q3 2 10 1h14v22z" fill="#dce8e0" stroke={c} strokeWidth="1.500" />
    <path d="M14 8l18 2-2 20-18-2z" fill="#f4f8f4" stroke={c} />
    <path d="M22 13h7M22 17h7M21 21h7M17 25h11" stroke={c} strokeWidth="2.500" />
    <text x="5" y="21" fontSize="18" fontWeight="bold" fontFamily="Liberation Serif, serif" fill={c}>{letter}</text>
  </svg>
);
const teapot = (
  <svg width="34" height="28" viewBox="0 0 34 28">
    <path d="M2 4l9-3 5 3-2 4-10 1z" fill="#28b8b0" stroke="#107878" />
    <ellipse cx="18" cy="16" rx="14" ry="9" fill="#28b0a8" stroke="#28406c" strokeWidth="2" />
    <ellipse cx="18" cy="15" rx="8" ry="5" fill="none" stroke="#e8e048" strokeWidth="1.500" strokeDasharray="9 5" />
    <circle cx="18" cy="12" r="4" fill="#0c6c74" />
    <path d="M6 20q6 6 14 5M28 9l5-1-1 5" fill="none" stroke="#58d8e0" strokeWidth="2.500" />
  </svg>
);
const genX = (
  <svg width="32" height="32" viewBox="0 0 32 32">
    <path d="M3 2h7l8 13 11-13-9 16 10 12h-7l-8-11L3 30l9-14z" fill="#6c0c80" stroke="#fff" strokeWidth="1" />
  </svg>
);
const bird = (
  <svg width="29" height="30" viewBox="0 0 29 30">
    <rect width="29" height="30" rx="6" fill="#1890ff" />
    <path d="M8 5q7 7 14 9l-2 5h2l-9 9 2-6h-3l3-4q-7-4-7-13z" fill="#fff" />
  </svg>
);

const tasks: { icon: React.ReactNode; w: number; m: number; active?: boolean; stack?: boolean }[] = [
  { icon: shell, w: 58, m: 4 }, { icon: notes, w: 58, m: 4 }, { icon: redG, w: 58, m: 4 }, { icon: greenP, w: 58, m: 4 }, { icon: floppy, w: 58, m: 4 },
  { icon: office("X", "#1c8040"), w: 50, m: 12, stack: true }, { icon: office("W", "#2858a8"), w: 52, m: 10, stack: true }, { icon: teapot, w: 58, m: 4 },
  { icon: genX, w: 51, m: 11, active: true, stack: true }, { icon: teapot, w: 58, m: 4 }, { icon: bird, w: 58, m: 4 },
];

export default function App() {
  return (
    <Screen>
      <Global />
      <TitleBar>
        <TitleIcon>
          <svg width="8" height="14" viewBox="8 0 8 16" preserveAspectRatio="none">
            <rect x="0" y="0.500" width="15.500" height="15" fill="#f4f4e8" stroke="#222" />
            <rect x="0" y="1" width="15" height="3" fill="#101880" />
            <path d="M4 6l8 8M13 5l-8 9" stroke="#b0a800" strokeWidth="2" />
          </svg>
        </TitleIcon>
        <TitleText>Graphic Editor 9.07b2 (00@HY-HYCAM-PC411 - Windows, pid:4732)</TitleText>
        <CaptionButtons>
          <Caption $w={28}><svg width="12" height="5"><rect x=".5" y=".5" width="11" height="4" rx="1" fill="#fff" stroke="#445" /></svg></Caption>
          <Caption $w={27}><svg width="12" height="10"><path d="M.5.500h11v9h-11zM4 3.500h4v3h-4z" fill="#fff" stroke="#445" fillRule="evenodd" /></svg></Caption>
          <Caption $w={46}><svg width="12" height="11"><path d="M2 2l8 7M10 2l-8 7" stroke="#445" strokeWidth="4.500" /><path d="M2 2l8 7M10 2l-8 7" stroke="#fff" strokeWidth="2.500" /></svg></Caption>
        </CaptionButtons>
      </TitleBar>
      <Frame>
        <Client>
          <MenuStrip>
            <MenuBar>
              {menus.map(([t, w, k]) => (
                <MenuItem key={t} $w={w}>
                  {t.slice(0, Math.max(k, 0))}
                  {k >= 0 && <Key>{t[k]}</Key>}
                  {t.slice(k + 1)}
                </MenuItem>
              ))}
              <Spacer />
              <MenuItem $w={31}>Help</MenuItem>
            </MenuBar>
            <Brand>
              <Logo><FrontlineLogo /></Logo>
              <Product>
                <ProductName>Genesis 2000</ProductName>
                <ProductSub>Graphic Editor</ProductSub>
              </Product>
              <Stamp>
                <span>08 Nov 2022</span>
                <span>03:59 PM</span>
                <Pause />
              </Stamp>
            </Brand>
          </MenuStrip>
          <Work>
            <LeftPanel>
              <Info>Job : 4b6d705xa0</Info>
              <Info>Step: cam</Info>
              <MatrixFrame><MatrixButton>Job Matrix ...</MatrixButton></MatrixFrame>
              <ListArea>
                <ListView>
                  <ListFrame>
                    {layers.map((g, i) => (
                      <Group key={i}>
                        {g.map((l) => (
                          <Row key={l.n}>
                            <Check $on={l.on} />
                            <Swatch $c={l.c} />
                            <Label $bg={l.bg || C.aqua} $fg={l.fg || "#101008"}>
                              {l.n}
                              {(l.hand || l.grid) && <Marks>{l.hand && <Hand />}{l.grid && <GridMark />}</Marks>}
                            </Label>
                          </Row>
                        ))}
                      </Group>
                    ))}
                  </ListFrame>
                  <ListEdge />
                </ListView>
                <ScrollBar>
                  <svg width="14" height="13"><path d="M1 12L7 1l5 11z" fill={C.tealMid} stroke={C.tealLight} strokeWidth="1.500" /><path d="M7 1l5 11H1" fill="none" stroke={C.tealDark} /></svg>
                  <Thumb />
                  <Spacer />
                  <svg width="14" height="12"><path d="M1 1h11L7 11z" fill={C.teal} stroke={C.tealDark} strokeWidth="1.500" /><path d="M12 1H1l6 10" fill="none" stroke={C.tealLight} /></svg>
                </ScrollBar>
              </ListArea>
              <Selected>Selected : 0</Selected>
            </LeftPanel>
            <Canvas>
              <Board />
              <Pop>
                <PopTitle>
                  <PopIcon><AppIcon size={15} /></PopIcon>
                  <PopName>Popview - 1</PopName>
                  <PopClose>
                    <svg width="12" height="11"><path d="M2 2l8 7M10 2l-8 7" stroke="#433" strokeWidth="4.500" /><path d="M2 2l8 7M10 2l-8 7" stroke="#fff" strokeWidth="2.500" /></svg>
                  </PopClose>
                </PopTitle>
                <PopBody>
                  <PopMain>
                    <PopImage><PopDrawing /></PopImage>
                    <PopTools>
                      {["restore", "up", "down", "left", "right", "out", "in"].map((n) => (
                        <SmallButton key={n}><SmallFace><Glyph name={n} size={21} /></SmallFace></SmallButton>
                      ))}
                    </PopTools>
                  </PopMain>
                  <CloseBar>Close</CloseBar>
                </PopBody>
              </Pop>
            </Canvas>
            <RightPanel>
              <ToolGrid $edge={C.tealLight}>
                {topTools.map((n) => <Tool key={n} $tone={n.startsWith("net") ? "red" : "aqua"}><Glyph name={n} /></Tool>)}
              </ToolGrid>
              <ToolGrid $edge="#7c7c7c">
                {editTools.map((n, i) => <Tool key={n} $tone={i < 4 ? "white" : i < 20 ? "grey" : "orange"}><Glyph name={n} /></Tool>)}
              </ToolGrid>
              <Overview>
                <OverBoard>
                  <svg width="102" height="234" viewBox="0 0 102 234">
                    <path d="M1 1h98v228H1z" fill="none" stroke="#8c9c98" strokeWidth="2" />
                    <path d="M-2 226l7 7M5 226l-7 7" stroke="#c0c0a0" />
                  </svg>
                </OverBoard>
              </Overview>
              <Coords>{"X = -2.294366\"\nY = 4.419905\""}</Coords>
            </RightPanel>
          </Work>
          <CommandBar>
            <ModeButton $w={25}><ModeFace><svg width="17" height="20"><path d="M-4 .5H16.500v19H-4M4 5l9 10M4 9V5h4M13 11v4h-4" fill="none" stroke="#000" /></svg></ModeFace></ModeButton>
            <ModeButton $w={31}><ModeFace><svg width="20" height="20"><path d="M.5.500h19v19H.5zM4 15L15 4M4 15h5M6 3v4h2M10 13h3v3h-3zM14 13l3 3M17 13l-3 3" fill="none" stroke="#000" /></svg></ModeFace></ModeButton>
            <ModeButton $w={28} $on><ModeFace><svg width="18" height="18"><path d="M4 1h13v16H1V5zM9 1v16M1 9h16" fill="none" stroke="#000" strokeWidth="1.500" /></svg></ModeFace></ModeButton>
            <CreamText $w={45}>X Y :</CreamText>
            <Entry><svg width="7" height="17"><path d="M1 .5h2M4 .5h2M3.500 1v14M1 15.500h5" stroke="#000" /></svg></Entry>
            <ModeButton $w={30} $on><ModeFace><svg width="17" height="18"><path d="M.5.500h16v17H.5z" fill="none" stroke="#000" /><path d="M8.500 3v8M8.500 13v2" stroke="#000" strokeWidth="2" /></svg></ModeFace></ModeButton>
            <CreamText>{"<M1> - Select first area corner"}</CreamText>
            <UnitBox><Unit>Inch<UnitMark /></Unit></UnitBox>
          </CommandBar>
          <StatusBar><StatusText>DX=-0.00293,DY=0,D=0.00293</StatusText></StatusBar>
        </Client>
        <WindowEdge />
      </Frame>
      <TaskBar>
        <Orb>
          <svg width="38" height="38" viewBox="0 0 38 38">
            <defs><radialGradient id="orb" cx="50%" cy="80%" r="75%"><stop offset="0" stopColor="#40c8f0" /><stop offset=".6" stopColor="#1c5c98" /><stop offset="1" stopColor="#8cb0d0" /></radialGradient></defs>
            <circle cx="19" cy="19" r="17.500" fill="url(#orb)" stroke="#86a8c4" />
            <path d="M10 11q4-2 8-1l-1.500 8q-4-1-8 1z" fill="#f06830" />
            <path d="M20 11q4 2 8 0l-1.500 8q-4 2-8 0z" fill="#8cc83c" />
            <path d="M8 21q4-2 8-1l-1.500 8q-4-1-8 1z" fill="#40a0e8" />
            <path d="M18 21q4 2 8 0l-1.500 8q-4 2-8 0z" fill="#f8cc30" />
          </svg>
        </Orb>
        {tasks.map((t, i) => <Task key={i} $w={t.w} $m={t.m} $active={t.active} $stack={t.stack}>{t.icon}</Task>)}
        <Spacer />
        <Tray>
          <TrayItem $ml={0}><svg width="16" height="15"><rect x=".5" y="6.500" width="15" height="8" rx="1" fill="#b8b8b8" stroke="#e8e8e8" /><path d="M2 9h12M2 11h12M4 13h8" stroke="#444" strokeDasharray="1.500 1" /><path d="M3 5q2-4 5-2t6-2" fill="none" stroke="#ccc" /></svg></TrayItem>
          <TrayItem $ml={6}><svg width="16" height="16"><circle cx="8" cy="8" r="7.200" fill="#1818b0" stroke="#c8d0ff" /><text x="4.500" y="13" fontSize="13" fontWeight="bold" fontFamily="Liberation Sans, sans-serif" fill="#fff">?</text></svg></TrayItem>
          <TrayItem $ml={10}><svg width="8" height="18"><path d="M2.500.500h5v3.500h-5zM.5 3h4.500v3h-4.500z" fill="none" stroke="#fff" /><path d="M1 14h6l-3 3z" fill="#fff" /></svg></TrayItem>
          <TrayItem $ml={11}><svg width="8" height="5"><path d="M0 5l4-4 4 4z" fill="#fff" /></svg></TrayItem>
          <TrayItem $ml={12}><svg width="17" height="14"><path d="M0 13L11 1v12z" fill="#f00808" /><path d="M10 6l7 7h-3L9 8z" fill="#20e040" /></svg></TrayItem>
          <TrayItem $ml={14}><svg width="16" height="16"><path d="M1.500 1v14" stroke="#fff" strokeWidth="1.500" /><path d="M3 2q4-2 8 1v6q-4-2-8 0z" fill="#fff" /><circle cx="11" cy="11" r="4.500" fill="#e02020" /><path d="M9 9l4 4M13 9l-4 4" stroke="#fff" strokeWidth="1.500" /></svg></TrayItem>
          <TrayItem $ml={8}><svg width="16" height="14"><path d="M0 5h3l4-4v12l-4-4H0z" fill="#fff" /><path d="M9 4q2 3 0 6M11 2.500q4 4.500 0 9" fill="none" stroke="#fff" /></svg></TrayItem>
          <TrayItem $ml={9}><svg width="15" height="15"><path d="M4.500 3.500h9.500v8h-9.500zM6 13.500h6" fill="none" stroke="#fff" strokeWidth="1.500" /><path d="M1 0v4h4V0M3 4v9h3" fill="none" stroke="#fff" /></svg></TrayItem>
        </Tray>
        <Clock>16:21<br />2022/11/8</Clock>
        <Peek />
      </TaskBar>
    </Screen>
  );
}
